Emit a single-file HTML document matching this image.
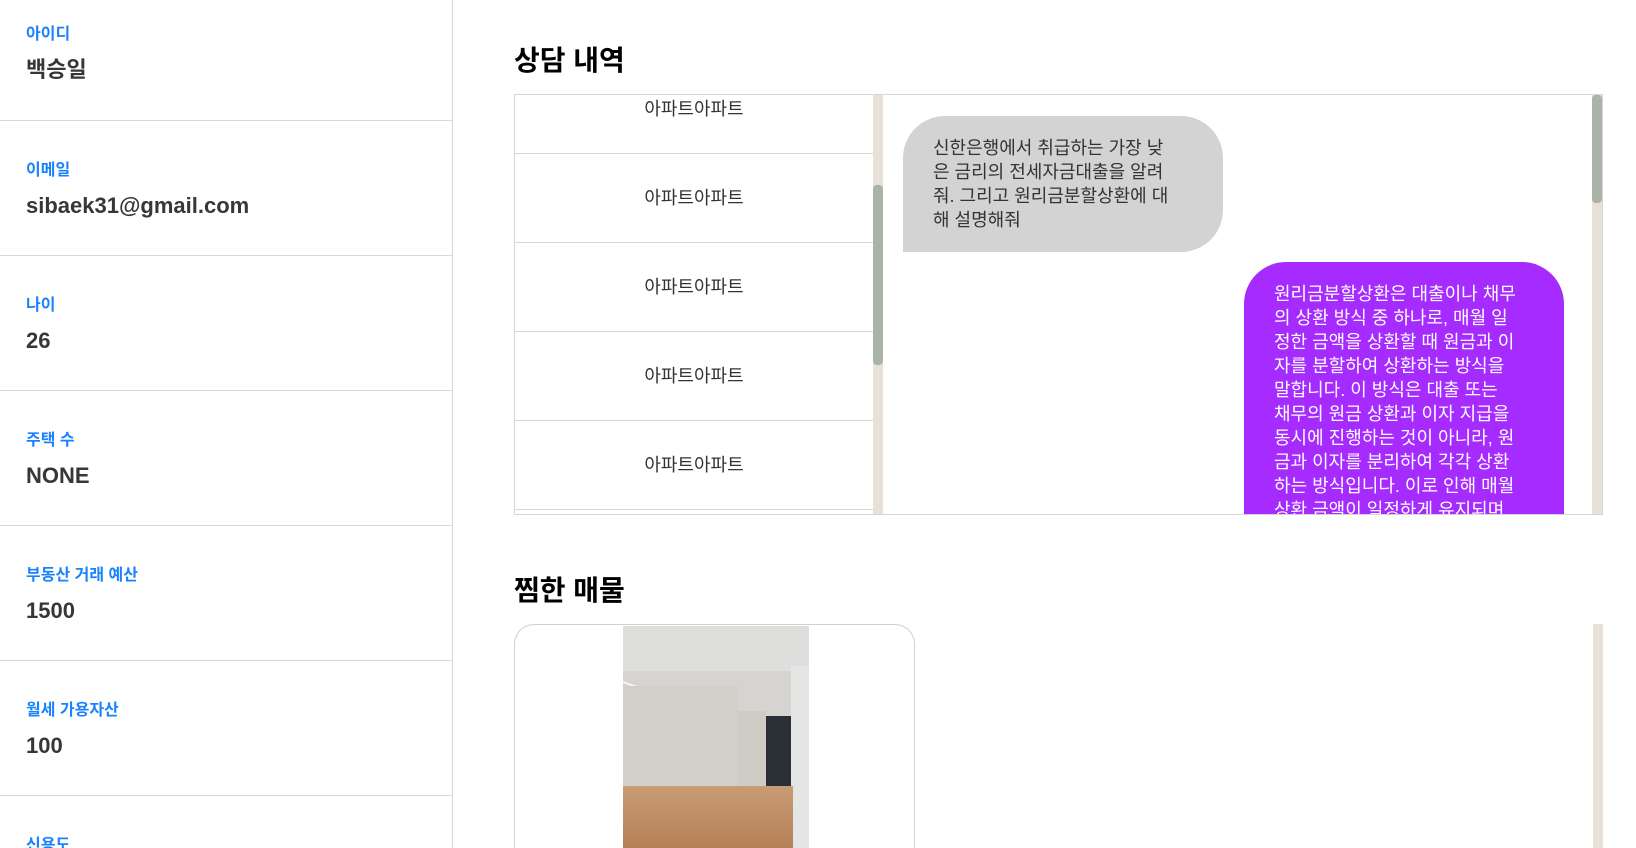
<!DOCTYPE html>
<html><head><meta charset="utf-8"><style>
*{margin:0;padding:0;box-sizing:border-box}
html,body{width:1636px;height:848px;overflow:hidden}
body{background:#fff;font-family:"Liberation Sans","Noto Sans CJK KR",sans-serif;position:relative}
.side{position:absolute;left:0;top:0;width:453px;height:848px;border-right:1px solid #d6d6d6;overflow:hidden}
.row{position:absolute;left:0;width:453px;height:135px;border-bottom:1px solid #d9d9d9}
.lab{position:absolute;left:26px;top:39px;font-size:16px;font-weight:bold;color:#1a82ff;line-height:22px}
.val{position:absolute;left:26px;top:70px;font-size:22px;font-weight:bold;color:#3a3636;line-height:30px}
h2{position:absolute;left:514px;font-size:28px;font-weight:bold;color:#000;line-height:34px}
.box{position:absolute;left:514px;top:94px;width:1089px;height:421px;border:1px solid #d6d6d6;overflow:hidden}
.list{position:absolute;left:0;top:0;width:358px;height:421px;overflow:hidden}
.item{position:absolute;left:0;width:358px;height:89px;border-bottom:1px solid #d9d9d9;text-align:center;line-height:89px;font-size:18px;color:#333}
.track1{position:absolute;left:358px;top:0;width:10px;height:421px;background:#e8e1d8}
.thumb1{position:absolute;left:358px;top:90px;width:10px;height:180px;background:#a9b3a6;border-radius:4px}
.b1{position:absolute;left:388px;top:21px;width:320px;height:136px;background:#d3d3d3;border-radius:42px 42px 42px 0;padding:20px 0 0 30px;font-size:18px;line-height:24px;color:#333;white-space:nowrap}
.b2{position:absolute;left:729px;top:167px;width:320px;height:300px;background:#a52bff;border-radius:42px 42px 0 42px;padding:20px 0 0 30px;font-size:18px;line-height:24px;color:#fff;white-space:nowrap}
.track2{position:absolute;right:0;top:0;width:10px;height:421px;background:#e8e1d8}
.thumb2{position:absolute;right:0;top:0;width:10px;height:108px;background:#a9b3a6;border-radius:4px}
.card{position:absolute;left:514px;top:624px;width:401px;height:224px;border:1px solid #d0d0d0;border-bottom:none;border-radius:20px 20px 0 0;overflow:hidden}
.img{position:absolute;left:108px;top:1px;width:186px;height:223px;background:#d6d4d0;overflow:hidden}
.track3{position:absolute;left:1593px;top:624px;width:10px;height:224px;background:#e8e1d8}
</style></head><body>
<div class="side">
<div class="row" style="top:0;height:121px"><div class="lab" style="top:24px">아이디</div><div class="val" style="top:55px">백승일</div></div>
<div class="row" style="top:121px"><div class="lab">이메일</div><div class="val">sibaek31@gmail.com</div></div>
<div class="row" style="top:256px"><div class="lab">나이</div><div class="val">26</div></div>
<div class="row" style="top:391px"><div class="lab">주택 수</div><div class="val">NONE</div></div>
<div class="row" style="top:526px"><div class="lab">부동산 거래 예산</div><div class="val">1500</div></div>
<div class="row" style="top:661px"><div class="lab">월세 가용자산</div><div class="val">100</div></div>
<div class="row" style="top:796px;height:52px;border:none"><div class="lab">신용도</div></div>
</div>
<h2 style="top:44px">상담 내역</h2>
<div class="box">
<div class="list">
<div class="item" style="top:-30px">아파트아파트</div>
<div class="item" style="top:59px">아파트아파트</div>
<div class="item" style="top:148px">아파트아파트</div>
<div class="item" style="top:237px">아파트아파트</div>
<div class="item" style="top:326px">아파트아파트</div>
</div>
<div class="track1"></div><div class="thumb1"></div>
<div class="b1">신한은행에서 취급하는 가장 낮<br>은 금리의 전세자금대출을 알려<br>줘. 그리고 원리금분할상환에 대<br>해 설명해줘</div>
<div class="b2">원리금분할상환은 대출이나 채무<br>의 상환 방식 중 하나로, 매월 일<br>정한 금액을 상환할 때 원금과 이<br>자를 분할하여 상환하는 방식을<br>말합니다. 이 방식은 대출 또는<br>채무의 원금 상환과 이자 지급을<br>동시에 진행하는 것이 아니라, 원<br>금과 이자를 분리하여 각각 상환<br>하는 방식입니다. 이로 인해 매월<br>상환 금액이 일정하게 유지되며,</div>
<div class="track2"></div><div class="thumb2"></div>
</div>
<h2 style="top:574px">찜한 매물</h2>
<div class="card"><div class="img">
<div style="position:absolute;left:0;top:0;width:186px;height:45px;background:#dededc"></div>
<div style="position:absolute;left:0;top:55px;width:130px;height:2px;background:#f4f4f4;transform:rotate(20deg);transform-origin:left"></div>
<div style="position:absolute;left:0;top:60px;width:115px;height:120px;background:#d2cfca"></div>
<div style="position:absolute;left:115px;top:85px;width:28px;height:95px;background:#cfccc6"></div>
<div style="position:absolute;left:143px;top:90px;width:25px;height:95px;background:#2a2f36"></div>
<div style="position:absolute;left:168px;top:40px;width:18px;height:183px;background:#e4e6e6"></div>
<div style="position:absolute;left:0;top:160px;width:170px;height:63px;background:linear-gradient(180deg,#c99c76,#b47f55)"></div>
</div></div>
<div class="track3"></div>
</body></html>
